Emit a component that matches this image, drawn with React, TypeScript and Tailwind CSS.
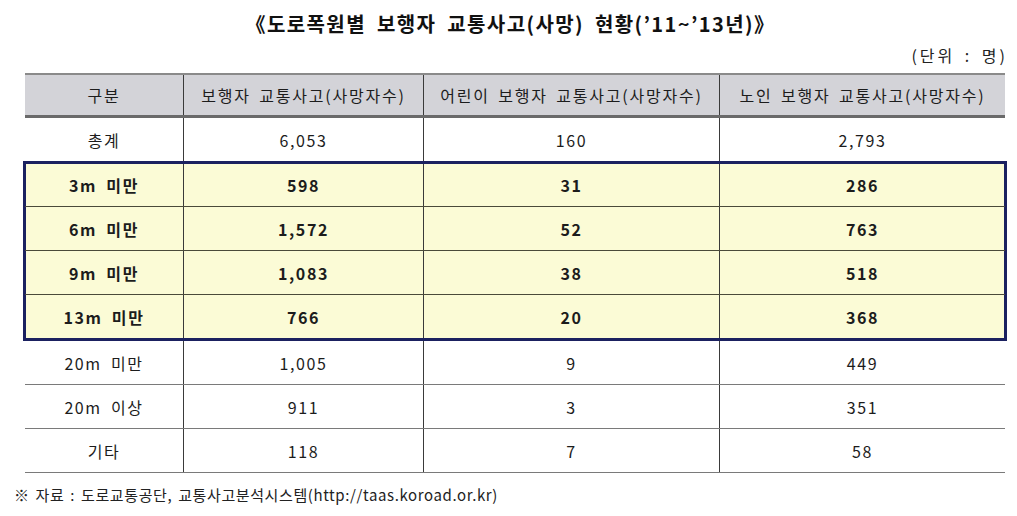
const FONT = "font-['Noto_Sans_CJK_KR','Noto_Sans',sans-serif]";

type Row = { label: string; total: string; child: string; senior: string };

const TOTAL: Row = { label: "총계", total: "6,053", child: "160", senior: "2,793" };

const HIGHLIGHT: Row[] = [
  { label: "3m 미만", total: "598", child: "31", senior: "286" },
  { label: "6m 미만", total: "1,572", child: "52", senior: "763" },
  { label: "9m 미만", total: "1,083", child: "38", senior: "518" },
  { label: "13m 미만", total: "766", child: "20", senior: "368" },
];

const REST: Row[] = [
  { label: "20m 미만", total: "1,005", child: "9", senior: "449" },
  { label: "20m 이상", total: "911", child: "3", senior: "351" },
  { label: "기타", total: "118", child: "7", senior: "58" },
];

const COLS = "grid grid-cols-[158px_240px_296px_286px]";

function Cells({ row, bold, h }: { row: Row; bold?: boolean; h: string }) {
  const cell = `flex items-center justify-center ${h} ${bold ? "font-bold" : ""}`;
  return (
    <>
      <div className={`${cell} [word-spacing:4px]`}>{row.label}</div>
      <div className={`${cell} border-l border-[#3a3a3a]`}>{row.total}</div>
      <div className={`${cell} border-l border-[#3a3a3a]`}>{row.child}</div>
      <div className={`${cell} border-l border-[#3a3a3a]`}>{row.senior}</div>
    </>
  );
}

export default function App() {
  return (
    <div className={`${FONT} relative h-[516px] w-[1017px] overflow-hidden bg-white text-[#1c1c1c]`}>
      <h1 className="pt-[10px] pl-[4px] text-center text-[20px] font-bold leading-[28px] tracking-[1.4px] text-[#111] [word-spacing:5px]">
        《도로폭원별 보행자 교통사고(사망) 현황(’11~’13년)》
      </h1>

      <div className="mt-[6px] pr-[9px] text-right text-[16px] leading-[22px] tracking-[3px] text-[#222] [word-spacing:3px]">
        (단위 : 명)
      </div>

      <div className="ml-[25px] mt-[7px] w-[980px] text-[16px] tracking-[1.6px]">
        <div className={`${COLS} border-t-2 border-b-[3px] border-t-[#8a8a8a] border-b-[#6a6a6a] bg-[#d3d3d8] tracking-[1.8px] [word-spacing:3px]`}>
          <div className="flex h-[40px] items-center justify-center">구분</div>
          <div className="flex h-[40px] items-center justify-center border-l border-[#3a3a3a]">보행자 교통사고(사망자수)</div>
          <div className="flex h-[40px] items-center justify-center border-l border-[#3a3a3a]">어린이 보행자 교통사고(사망자수)</div>
          <div className="flex h-[40px] items-center justify-center border-l border-[#3a3a3a]">노인 보행자 교통사고(사망자수)</div>
        </div>

        <div className={COLS}>
          <Cells row={TOTAL} h="h-[43px]" />
        </div>

        <div className="-mx-[2px] border-[3px] border-[#1b2160] bg-[#fbfbd6]">
          {HIGHLIGHT.map((row, i) => (
            <div
              key={row.label}
              className={`${COLS} -mx-px ${i > 0 ? "border-t border-[#4a4a3a]" : ""}`}
            >
              <Cells row={row} bold h={i > 0 ? "h-[43px]" : "h-[42px]"} />
            </div>
          ))}
        </div>

        {REST.map((row) => (
          <div key={row.label} className={`${COLS} border-b border-[#7a7a7a]`}>
            <Cells row={row} h="h-[43px]" />
          </div>
        ))}
      </div>

      <div className="ml-[14px] mt-[12px] text-[15px] leading-[20px] tracking-[0.6px] text-[#222] [word-spacing:2px]">
        ※ 자료 : 도로교통공단, 교통사고분석시스템(http://taas.koroad.or.kr)
      </div>
    </div>
  );
}
